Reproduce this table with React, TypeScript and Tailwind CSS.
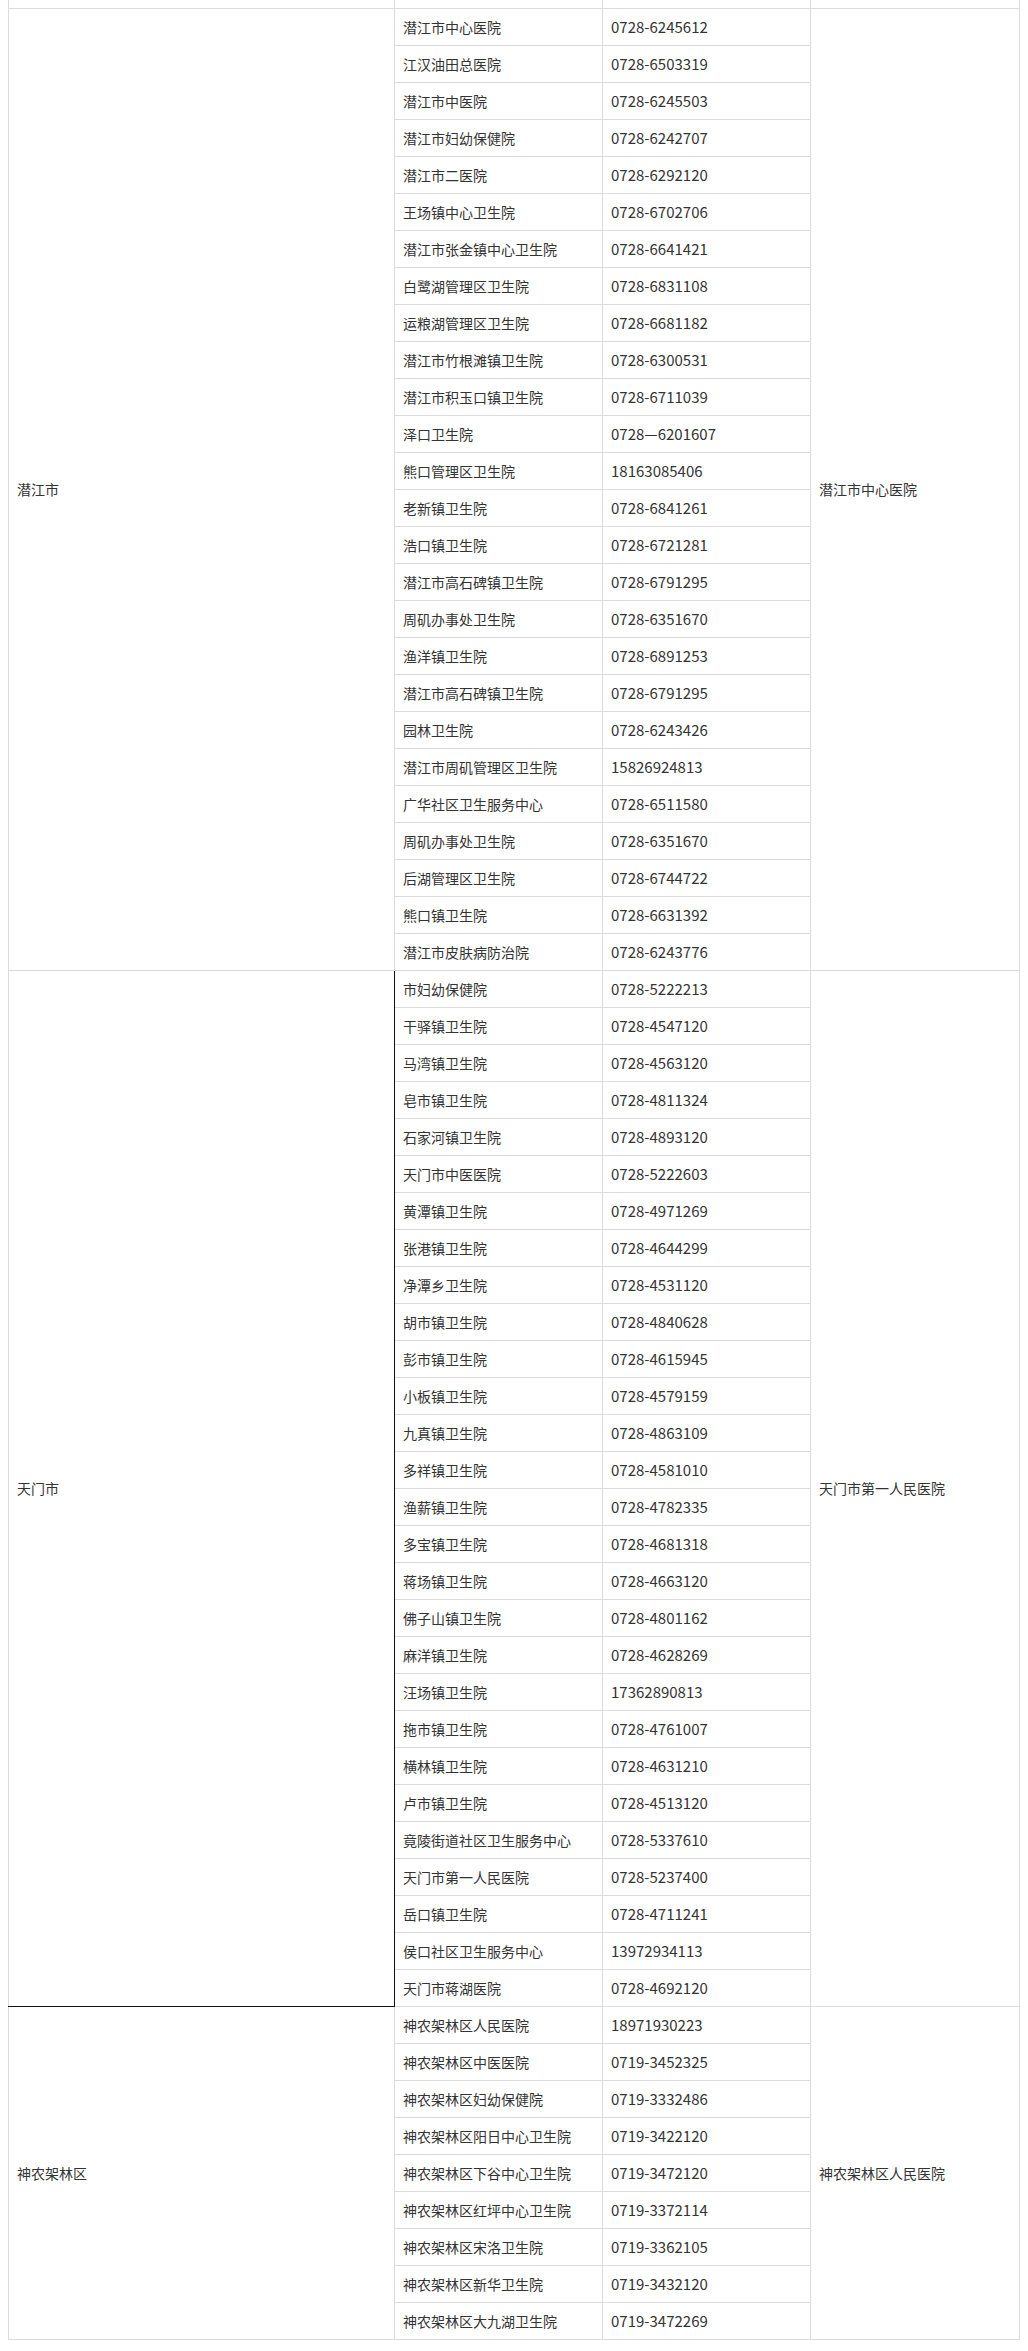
type Row = [string, string];

const qianjiang: Row[] = [
  ["潜江市中心医院", "0728-6245612"],
  ["江汉油田总医院", "0728-6503319"],
  ["潜江市中医院", "0728-6245503"],
  ["潜江市妇幼保健院", "0728-6242707"],
  ["潜江市二医院", "0728-6292120"],
  ["王场镇中心卫生院", "0728-6702706"],
  ["潜江市张金镇中心卫生院", "0728-6641421"],
  ["白鹭湖管理区卫生院", "0728-6831108"],
  ["运粮湖管理区卫生院", "0728-6681182"],
  ["潜江市竹根滩镇卫生院", "0728-6300531"],
  ["潜江市积玉口镇卫生院", "0728-6711039"],
  ["泽口卫生院", "0728—6201607"],
  ["熊口管理区卫生院", "18163085406"],
  ["老新镇卫生院", "0728-6841261"],
  ["浩口镇卫生院", "0728-6721281"],
  ["潜江市高石碑镇卫生院", "0728-6791295"],
  ["周矶办事处卫生院", "0728-6351670"],
  ["渔洋镇卫生院", "0728-6891253"],
  ["潜江市高石碑镇卫生院", "0728-6791295"],
  ["园林卫生院", "0728-6243426"],
  ["潜江市周矶管理区卫生院", "15826924813"],
  ["广华社区卫生服务中心", "0728-6511580"],
  ["周矶办事处卫生院", "0728-6351670"],
  ["后湖管理区卫生院", "0728-6744722"],
  ["熊口镇卫生院", "0728-6631392"],
  ["潜江市皮肤病防治院", "0728-6243776"],
];

const tianmen: Row[] = [
  ["市妇幼保健院", "0728-5222213"],
  ["干驿镇卫生院", "0728-4547120"],
  ["马湾镇卫生院", "0728-4563120"],
  ["皂市镇卫生院", "0728-4811324"],
  ["石家河镇卫生院", "0728-4893120"],
  ["天门市中医医院", "0728-5222603"],
  ["黄潭镇卫生院", "0728-4971269"],
  ["张港镇卫生院", "0728-4644299"],
  ["净潭乡卫生院", "0728-4531120"],
  ["胡市镇卫生院", "0728-4840628"],
  ["彭市镇卫生院", "0728-4615945"],
  ["小板镇卫生院", "0728-4579159"],
  ["九真镇卫生院", "0728-4863109"],
  ["多祥镇卫生院", "0728-4581010"],
  ["渔薪镇卫生院", "0728-4782335"],
  ["多宝镇卫生院", "0728-4681318"],
  ["蒋场镇卫生院", "0728-4663120"],
  ["佛子山镇卫生院", "0728-4801162"],
  ["麻洋镇卫生院", "0728-4628269"],
  ["汪场镇卫生院", "17362890813"],
  ["拖市镇卫生院", "0728-4761007"],
  ["横林镇卫生院", "0728-4631210"],
  ["卢市镇卫生院", "0728-4513120"],
  ["竟陵街道社区卫生服务中心", "0728-5337610"],
  ["天门市第一人民医院", "0728-5237400"],
  ["岳口镇卫生院", "0728-4711241"],
  ["侯口社区卫生服务中心", "13972934113"],
  ["天门市蒋湖医院", "0728-4692120"],
];

const shennongjia: Row[] = [
  ["神农架林区人民医院", "18971930223"],
  ["神农架林区中医医院", "0719-3452325"],
  ["神农架林区妇幼保健院", "0719-3332486"],
  ["神农架林区阳日中心卫生院", "0719-3422120"],
  ["神农架林区下谷中心卫生院", "0719-3472120"],
  ["神农架林区红坪中心卫生院", "0719-3372114"],
  ["神农架林区宋洛卫生院", "0719-3362105"],
  ["神农架林区新华卫生院", "0719-3432120"],
  ["神农架林区大九湖卫生院", "0719-3472269"],
];

const groups = [
  { city: "潜江市", rows: qianjiang, hospital: "潜江市中心医院", dark: false },
  { city: "天门市", rows: tianmen, hospital: "天门市第一人民医院", dark: true },
  { city: "神农架林区", rows: shennongjia, hospital: "神农架林区人民医院", dark: false },
];

const cell = "border border-[#dcdcdc] px-[8px] align-middle";

export default function App() {
  return (
    <div
      className="bg-white min-h-[2351px] pl-[8px] text-[14px] leading-[20px] text-[#333]"
      style={{ fontFamily: '"Noto Sans CJK SC", "Noto Sans", sans-serif' }}
    >
      <table className="table-fixed border-collapse w-[1011px]">
        <colgroup>
          <col className="w-[386px]" />
          <col className="w-[208px]" />
          <col className="w-[208px]" />
          <col className="w-[209px]" />
        </colgroup>
        <tbody>
          {/* tail of the row above, cut off by the top of the page */}
          <tr>
            <td className="border-x border-b border-[#dcdcdc] h-[8px] p-0" />
            <td className="border-x border-b border-[#dcdcdc] h-[8px] p-0" />
            <td className="border-x border-b border-[#dcdcdc] h-[8px] p-0" />
            <td className="border-x border-b border-[#dcdcdc] h-[8px] p-0" />
          </tr>
          {groups.map((g) =>
            g.rows.map((r, i) => (
              <tr key={g.city + i} className="h-[37px]">
                {i === 0 && (
                  <td
                    rowSpan={g.rows.length}
                    className={
                      g.dark
                        ? "border border-[#dcdcdc] border-r-[#111] border-b-[#111] px-[8px] align-middle"
                        : cell
                    }
                  >
                    {g.city}
                  </td>
                )}
                <td className={cell}>{r[0]}</td>
                <td className={cell + " text-[15px]"}>{r[1]}</td>
                {i === 0 && (
                  <td rowSpan={g.rows.length} className={cell}>
                    {g.hospital}
                  </td>
                )}
              </tr>
            ))
          )}
        </tbody>
      </table>
    </div>
  );
}
